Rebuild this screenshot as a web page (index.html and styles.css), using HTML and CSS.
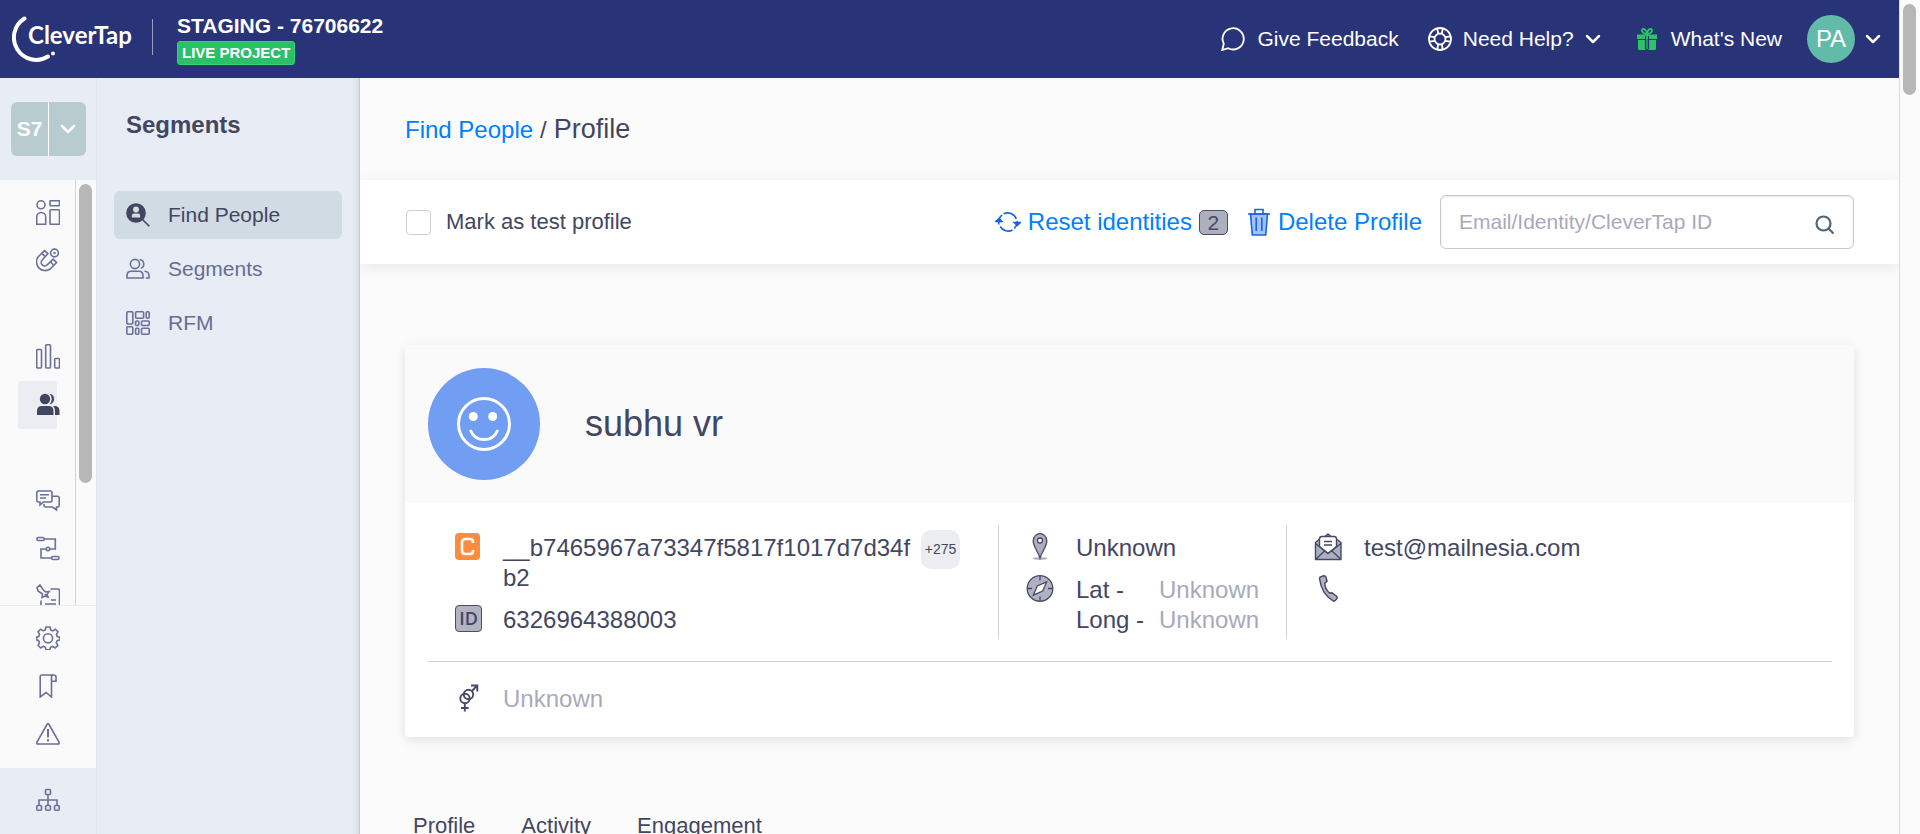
FILE: index.html
```html
<!DOCTYPE html>
<html lang="en">
<head>
<meta charset="utf-8">
<title>Find People / Profile</title>
<link rel="stylesheet" href="styles.css">
</head>
<body>
<div class="window">
  <div class="app">
    <header class="topbar">
      <a class="logo" href="#" aria-label="CleverTap">
        <svg class="logo-mark" viewBox="0 0 124 46" width="124" height="46">
          <path d="M12.500 2.500A22 22 0 1 0 36 40.500" fill="none" stroke="#fff" stroke-width="4" stroke-linecap="round"/>
          <circle cx="41" cy="37.500" r="2" fill="#fff"/>
          <text x="16" y="28" class="logo-text">CleverTap</text>
        </svg>
      </a>
      <div class="project">
        <span class="project-name">STAGING - 76706622</span>
        <span class="project-tag">LIVE PROJECT</span>
      </div>
      <nav class="top-actions">
        <a class="top-link" href="#">
          <svg class="icon" viewBox="0 0 24 24"><path d="M1.200 23l1.600-6.200A10.600 10.600 0 1 1 7.200 21.200z"/></svg>Give Feedback</a>
        <button class="top-link help" type="button">
          <svg class="icon" viewBox="0 0 24 24"><circle cx="12" cy="12" r="11"/><circle cx="12" cy="12" r="5.500"/><path d="M9.300 1.500l.8 5.200M14.700 1.500l-.8 5.200M9.300 22.500l.8-5.200M14.700 22.500l-.8-5.200M1.500 9.300l5.200.8M1.500 14.700l5.200-.8M22.500 9.300l-5.200.8M22.500 14.700l-5.200-.8"/></svg>Need Help?
          <svg class="chevron" viewBox="0 0 16 10"><path d="M2 2l6 6 6-6"/></svg></button>
        <a class="top-link news" href="#">
          <svg class="gift" viewBox="0 0 22 22"><path d="M1 6.500h20V11H1zM2 12h7.500v10H3.500Q2 22 2 20.500zM12.500 12H20v8.500q0 1.500-1.500 1.500h-6z" fill="#2dc268"/><path d="M11 8v13" stroke="#2dc268" stroke-width="1.400"/><path d="M9.500 8v13M12.500 8v13" stroke="#293377" stroke-width="1.200"/><path d="M11 6C5 5.500 5 1 7.500 1 9.500 1 11 4 11 6c0-2 1.500-5 3.500-5C17 1 17 5.500 11 6z" fill="none" stroke="#2dc268" stroke-width="1.800"/></svg>What's New</a>
        <button class="account" type="button"><span class="avatar">PA</span><svg class="chevron" viewBox="0 0 16 10"><path d="M2 2l6 6 6-6"/></svg></button>
      </nav>
    </header>

    <div class="workspace">
      <aside class="rail">
        <div class="rail-head">
          <button class="switcher" type="button"><span>S7</span><span class="switcher-arrow"><svg class="chevron" viewBox="0 0 16 10"><path d="M2 2l6 6 6-6"/></svg></span></button>
        </div>
        <div class="rail-scroll">
          <nav class="rail-nav">
            <a href="#" aria-label="Boards"><svg viewBox="0 0 24 25"><circle cx="5" cy="4.800" r="4"/><path d="M.7 24.300V17a4.500 4.500 0 0 1 9 0v7.300z"/><rect x="14" y=".7" width="9.500" height="5" rx=".8"/><rect x="14" y="9.800" width="9.500" height="14.500" rx=".8"/></svg></a>
            <a href="#" aria-label="Acquisition"><svg viewBox="0 0 24 25"><path d="M8.500 2.600l3.400 3L6.200 12a3.300 3.300 0 0 0 5 4.800l6-5.600 3.400 3.400-6.400 6.400A8.700 8.700 0 0 1 2 9z"/><path d="M5.900 5.400l3.300 3.200M14.300 13.800l3.400 3.500"/><circle cx="18.500" cy="5" r="3.900"/><circle cx="18.500" cy="5" r=".5"/></svg></a>
            <a class="section-start" href="#" aria-label="Analytics"><svg viewBox="0 0 24 25"><rect x=".7" y="5.500" width="4.800" height="18.500" rx="1"/><rect x="9.700" y=".8" width="4.800" height="23.200" rx="1"/><rect x="18.700" y="14.500" width="4.800" height="9.500" rx="1"/></svg></a>
            <a class="active" href="#" aria-label="Segments"><svg class="solid" viewBox="0 0 24 25"><circle cx="9" cy="7" r="5.200"/><path d="M1 23v-4q0-5 5-5h6.500q5 0 5 5v4zM13.500 1.800a5.300 5.300 0 0 1 0 10.500q2.300-2 2.300-5.200t-2.300-5.300zM17 14h1.500q5 0 5 5v4H19v-4q0-3.500-2-5z"/></svg></a>
            <a class="section-start" href="#" aria-label="Messages"><svg viewBox="0 0 24 25"><path d="M2.500 3h11.800q1.700 0 1.700 1.700v7.600q0 1.700-1.700 1.700H7.500L4 17v-3H2.500Q.8 14 .8 12.300V4.700Q.8 3 2.500 3zM4 6.800h9M4 10h6"/><path d="M16 8.200h5.500q1.700 0 1.700 1.700v7.400q0 1.700-1.700 1.700H20.500v3l-4-3H9.700Q8 19 8 17.300V16"/></svg></a>
            <a href="#" aria-label="Journeys"><svg viewBox="0 0 24 25"><rect x=".8" y="1.500" width="7.500" height="3" rx="1.500"/><path d="M8.300 3h11v10h-5.700M10.300 13H5v9h10.500"/><circle cx="12" cy="13" r="1.700"/><rect x="15.500" y="20.500" width="7.500" height="3" rx="1.500"/></svg></a>
            <a href="#" aria-label="Campaign designer"><svg viewBox="0 0 24 25"><path d="M1 3.500L4 1l3 4.500 2.500 2.500L13 7.500l-2 3 1 2.500-3-1-3 1.500.5-3.500L2 7zM9 10l3 3.500M14.500 5H22q1.500 0 1.500 1.500V26M5 16.500V26M15 16h5M9 20h11"/></svg></a>
          </nav>
          <div class="rail-track"><div class="rail-thumb"></div></div>
        </div>
        <nav class="rail-tools">
          <a href="#" aria-label="Settings"><svg viewBox="0 0 24 24"><path d="M9.900 1h4.200l.6 3 2.200.9 2.500-1.700 2.600 2.700-1.600 2.500.9 2.200 2.300.4v3l-2.500.7-.8 2.100 1.600 2.600-2.700 2.600-2.600-1.600-2.100.9-.6 2.600H10l-.6-2.700-2.200-.9-2.600 1.700-2.600-2.700 1.500-2.500-.8-2.100L.7 14v-3l2-.4.9-2.200L2 5.900l2.700-2.700 2.500 1.600L9.300 4z" stroke-linejoin="round"/><circle cx="12" cy="12.300" r="4.600"/></svg></a>
          <a href="#" aria-label="Bookmarks"><svg viewBox="0 0 24 24"><path d="M17.500 1H6Q4.200 1 4.200 3v20l5.900-4.500 5.400 4.500V3q0-2 2.200-2t2.300 2v4.300h-4.500"/></svg></a>
          <a href="#" aria-label="Alerts"><svg viewBox="0 0 24 24"><path d="M11 2.500q1-1.700 2 0l10 17.700q.8 1.800-1 1.800H2q-1.800 0-1-1.800z"/><path d="M12 7v8.500M12 17.300v2.200" stroke-width="2"/></svg></a>
        </nav>
        <div class="rail-foot">
          <a href="#" aria-label="Organization"><svg viewBox="0 0 24 24"><rect x="9.500" y="1.500" width="5" height="5" rx="1"/><rect x=".8" y="17.500" width="4.700" height="4.700" rx="1"/><rect x="9.700" y="17.500" width="4.700" height="4.700" rx="1"/><rect x="18.500" y="17.500" width="4.700" height="4.700" rx="1"/><path d="M12 6.500v11M3 17.500V12h18v5.500"/></svg></a>
        </div>
      </aside>

      <aside class="submenu">
        <h2>Segments</h2>
        <nav class="submenu-list">
          <a class="current" href="#"><svg viewBox="0 0 24 24"><circle cx="10" cy="10" r="9.800" fill="#414560"/><path d="M16.500 16.500l6.800 6.800" stroke="#414560" stroke-width="1.600"/><circle cx="10" cy="6.500" r="3" fill="#d1dbe4"/><path d="M5.800 14.500v-1.700q0-2.300 2.300-2.300h3.800q2.300 0 2.300 2.300v1.700z" fill="#d1dbe4"/></svg>Find People</a>
          <a href="#"><svg viewBox="0 0 24 24"><circle cx="9" cy="7" r="4.600"/><path d="M1 21v-2.500q0-4.300 4.300-4.300h7.400q4.300 0 4.300 4.300V21zM13.500 2.500a4.600 4.600 0 0 1 1.500 8.800M18.500 14.200q4.500.3 4.500 4.300V21h-3.300"/></svg>Segments</a>
          <a href="#"><svg viewBox="0 0 24 24"><rect x=".8" y=".8" width="6" height="12.200" rx="1"/><rect x="9.600" y=".8" width="8" height="6.400" rx="1"/><rect x="20.200" y=".8" width="3" height="6.400" rx="1"/><rect x="9.600" y="10" width="3.200" height="4.500" rx="1"/><rect x="15.500" y="10" width="7.700" height="4.500" rx="1"/><rect x=".8" y="15.800" width="6" height="7.400" rx="1"/><rect x="9.600" y="17.200" width="3.200" height="6" rx="1"/><rect x="15.500" y="17.200" width="7.700" height="6" rx="1"/></svg>RFM</a>
        </nav>
      </aside>

      <main class="content">
        <nav class="breadcrumb"><a href="#">Find People</a><span>/</span><span class="crumb-here">Profile</span></nav>
        <section class="toolbar">
          <label class="test-flag" for="test-profile"><input type="checkbox" id="test-profile">Mark as test profile</label>
          <div class="toolbar-actions">
            <button class="action reset" type="button"><svg viewBox="0 0 26 22" width="26" height="22"><path d="M4 13.500A9.300 9.300 0 0 1 7 4M8.500 2.900a9.300 9.300 0 0 1 12.800 5M22.200 10a9.300 9.300 0 0 1-3 7.500M17.500 19a9.300 9.300 0 0 1-12.300-3.500"/><path class="tip" d="M.8 10.500l3.200-3 3 3zM19.200 11.500l3.100 3 3-3z"/></svg>Reset identities<span class="count">2</span></button>
            <button class="action" type="button"><svg viewBox="0 0 22 28" width="22" height="28"><path d="M2.500 6h17L17.700 27H4.300z" fill="#a4c2f8"/><path d="M0 6h22M7 6V1.500h8V6M8.200 9.500v13.500M13.800 9.500v13.500"/></svg>Delete Profile</button>
            <div class="search">
              <input type="text" aria-label="Search profile" placeholder="Email/Identity/CleverTap ID">
              <button type="button" aria-label="Search"><svg viewBox="0 0 20 20" width="20" height="20"><circle cx="8.500" cy="8.500" r="7"/><path d="M13.500 13.500l5 5"/></svg></button>
            </div>
          </div>
        </section>

        <article class="card">
          <header class="card-head">
            <span class="face"><svg viewBox="0 0 54 54" width="54" height="54"><circle cx="27" cy="27" r="25.500"/><path d="M13.800 34a14.500 14.500 0 0 0 26.500 0" stroke-linecap="round"/><circle class="eye" cx="16.300" cy="19.500" r="4.500"/><circle class="eye" cx="35.700" cy="19.500" r="4.500"/></svg></span>
            <h1>subhu vr</h1>
          </header>
          <div class="card-body">
            <div class="facts">
              <div class="fact-col ids">
                <div class="fact">
                  <span class="tile brand"><svg viewBox="0 0 26 28" width="26" height="28"><rect width="25" height="27" rx="4" fill="#ff8c3e"/><path d="M18 10V9Q18 6 15 6H10.500Q7 6 7 9.500v8q0 3.500 3.500 3.500H15q3 0 3-3v-1" fill="none" stroke="#fff" stroke-width="2.600"/></svg></span>
                  <span class="fact-text identity">__b7465967a73347f5817f1017d7d34fb2</span>
                  <button class="more" type="button">+275</button>
                </div>
                <div class="fact"><span class="tile"><span class="id-tile">ID</span></span><span class="fact-text">6326964388003</span></div>
              </div>
              <div class="fact-col place">
                <div class="fact"><span class="tile wide"><svg viewBox="0 0 28 28" width="28" height="28"><ellipse cx="14" cy="25.500" rx="7.500" ry="1.500" fill="#b4b5c4"/><path d="M14 25C12 18.500 7.200 13.500 7.200 8a6.800 7.300 0 0 1 13.600 0C20.800 13.500 16 18.500 14 25z" fill="#acafbf" stroke="#474a66" stroke-width="1.300"/><circle cx="14" cy="7.500" r="2.500" fill="#fff" stroke="#474a66" stroke-width="1.300"/></svg></span><span class="fact-text">Unknown</span></div>
                <div class="fact"><span class="tile wide"><svg viewBox="0 0 28 28" width="28" height="28"><circle cx="14" cy="13.500" r="12.800" fill="#b0b2c1" stroke="#474a66" stroke-width="1.300"/><path d="M14 1v4.500M14 21.500V26M1 13.500h5M22 13.500h5" stroke="#474a66" stroke-width="1.300"/><path d="M20.700 6.800L16.700 16.100 7.300 20.200l4-9.300z" fill="#fff" stroke="#474a66" stroke-width="1.300"/></svg></span>
                  <dl class="coords"><dt>Lat -</dt><dd>Unknown</dd><dt>Long -</dt><dd>Unknown</dd></dl></div>
              </div>
              <div class="fact-col contact">
                <div class="fact"><span class="tile wide"><svg viewBox="0 0 28 28" width="28" height="28" stroke="#474a66" stroke-width="1.400" stroke-linejoin="round"><path d="M1.500 9.500L5.500 6 11 3.500 14 1l3 2.500L22.500 6 27 9.500V26.500H1.500z" fill="#acafbf"/><path d="M5.500 13.500V6q0-2.500 2.500-2.500h12q2.500 0 2.500 2.500v7.500L14 20.500z" fill="#fff"/><path d="M1.500 10.500l12.500 10 13-10M2 26l8.500-8M26.500 26l-8.500-8M10 8.500h8M10 12h8" fill="none"/></svg></span><span class="fact-text">test@mailnesia.com</span></div>
                <div class="fact"><span class="tile wide"><svg viewBox="0 0 28 28" width="28" height="28"><path d="M5.500 3.500q0-1.500 2-2l2.500-.8q1.500 0 2 1.600l1 4-2.300 2q.2 6 5 9.800l2.300-.4 4.800 3.800q.7 1-.3 2.500-1 2-2.500 2.300Q7.500 19.500 5.500 3.500z" fill="#b0b2c1" stroke="#474a66" stroke-width="1.500"/></svg></span></div>
              </div>
            </div>
            <div class="gender fact"><span class="tile"><svg viewBox="0 0 26 28" width="26" height="28" fill="none" stroke="#474a66" stroke-width="1.900"><circle cx="13.500" cy="10.500" r="4.700"/><circle cx="10" cy="14.500" r="4.700"/><path d="M17 7l5.200-5.700M16 1.500h6.300v6M9.800 19.500v8M6 24h7.600"/></svg></span><span class="fact-text muted">Unknown</span></div>
          </div>
        </article>

        <nav class="tabs"><a href="#">Profile</a><a href="#">Activity</a><a href="#">Engagement</a></nav>
      </main>
    </div>
  </div>
  <div class="page-track"><div class="page-thumb"></div></div>
</div>
</body>
</html>
```

FILE: styles.css
```css
* { box-sizing: border-box; }

body {
  margin: 0;
  font-family: "Liberation Sans", Arial, sans-serif;
  font-size: 24px;
  line-height: 30px;
  color: #434660;
  background: #fbfbfb;
}

a { color: inherit; text-decoration: none; }
button { font: inherit; color: inherit; background: none; border: 0; padding: 0; cursor: pointer; }
svg { display: block; flex: none; }

.window { display: flex; height: 100vh; overflow: hidden; }
.app { flex: 1; min-width: 0; display: flex; flex-direction: column; }
.page-track { width: 21px; flex: none; border-left: 1px solid #dcdcdc; background: #fbfbfb; padding: 4px 4px 4px 3px; }
.page-thumb { height: 11%; border-radius: 7px; background: #b7b7b7; }

/* Top bar */
.topbar {
  flex: none;
  display: flex;
  align-items: center;
  height: 78px;
  padding: 0 18px 0 12px;
  background: #293377;
  color: #fff;
}
.logo { padding-right: 16px; }
.logo-text { font: 700 24px Lato, sans-serif; fill: #fff; }
.project {
  display: flex;
  flex-direction: column;
  align-items: flex-start;
  gap: 2px;
  position: relative;
  padding-left: 25px;
}
.project::before {
  content: "";
  position: absolute;
  left: 0;
  top: 6px;
  bottom: 10px;
  width: 1px;
  background: #9a9fc2;
}
.project-name { font-size: 21px; font-weight: 700; line-height: 26px; }
.project-tag {
  padding: 0 4px;
  border: 1px solid #31d476;
  border-radius: 3px;
  background: #2dbf67;
  font-size: 15px;
  font-weight: 700;
  line-height: 22px;
}
.top-actions { display: flex; align-items: center; margin-left: auto; font-size: 21px; }
.top-link { display: flex; align-items: center; gap: 12px; }
.icon { width: 24px; height: 24px; fill: none; stroke: #fff; stroke-width: 1.8; }
.chevron { width: 16px; height: 10px; fill: none; stroke: #fff; stroke-width: 2.5; stroke-linecap: round; stroke-linejoin: round; }
.gift { width: 22px; height: 22px; }
.help { gap: 11px; margin: 0 35px 0 29px; }
.news { gap: 13px; margin-right: 25px; }
.account { display: flex; align-items: center; gap: 10px; }
.avatar { width: 48px; height: 48px; border-radius: 50%; background: #62baa9; font-size: 24px; line-height: 48px; text-align: center; }

/* Icon rail */
.workspace { flex: 1; min-height: 0; display: flex; }
.rail { width: 96px; flex: none; display: flex; flex-direction: column; background: #fafafa; }
.rail svg { fill: none; stroke: #6b7099; stroke-width: 1.6; }
.rail-head { height: 102px; padding: 24px 10px 24px 11px; background: #e8edf5; }
.switcher {
  display: flex;
  width: 100%;
  height: 54px;
  border-radius: 6px;
  background: #b8cccf;
  color: #fff;
  font-size: 21px;
  font-weight: 700;
  line-height: 54px;
}
.switcher > span { flex: 1; }
.switcher-arrow { display: flex; align-items: center; justify-content: center; align-self: stretch; border-left: 1px solid #fff; }
.rail .chevron { stroke: #fff; stroke-width: 2.5; }
.rail-scroll { flex: 1; min-height: 0; display: flex; overflow: hidden; }
.rail-nav { width: 75px; padding: 9px 0 0 18px; }
.rail-nav a { display: flex; align-items: center; width: 39px; height: 48px; padding: 0 0 2px 18px; border-radius: 3px; }
.rail-nav .section-start { margin-top: 48px; }
.rail-nav .active { background: #ecedf2; }
.rail-nav svg { width: 24px; height: 25px; }
.rail .solid { fill: #414560; stroke: none; }
.rail-track { flex: 1; border-left: 1px solid #d3d3d3; padding: 4px 4px 0 3px; }
.rail-thumb { height: 71%; border-radius: 7px; background: #b7b7b7; }
.rail-tools { padding: 8px 0 10px; border-top: 1px solid #ececee; }
.rail-tools a, .rail-foot a { display: flex; align-items: center; height: 48px; padding-left: 36px; }
.rail-tools svg, .rail-foot svg { width: 24px; height: 24px; }
.rail-foot { height: 66px; padding-top: 8px; background: #e8edf5; }

/* Section menu */
.submenu { width: 264px; flex: none; padding: 32px 17px 0; border-left: 1px solid #e0e5ee; border-right: 1px solid #c8cbd2; background: #e8edf5; box-shadow: inset -8px 0 8px -8px #c9cdd6; }
.submenu h2 { margin: 0 0 51px; padding-left: 12px; font-size: 24px; line-height: 30px; }
.submenu-list { display: flex; flex-direction: column; gap: 6px; font-size: 21px; color: #676c96; }
.submenu-list a { display: flex; align-items: center; gap: 18px; height: 48px; padding-left: 12px; border-radius: 6px; }
.submenu-list svg { width: 24px; height: 24px; fill: none; stroke: #6b7099; stroke-width: 1.6; }
.submenu-list .current { background: #d1dbe4; color: #434660; }
.submenu-list .current svg { stroke: none; }

/* Content */
.content { flex: 1; min-width: 0; overflow: hidden; }
.breadcrumb { display: flex; align-items: baseline; gap: 7px; height: 102px; padding: 36px 45px 0; }
.breadcrumb a { color: #007fff; }
.crumb-here { font-size: 27px; }
.toolbar {
  display: flex;
  align-items: center;
  justify-content: space-between;
  height: 84px;
  padding: 0 45px 0 46px;
  background: #fff;
  box-shadow: 0 3px 15px rgba(0, 0, 0, .08);
}
.test-flag { display: flex; align-items: center; gap: 15px; font-size: 22px; }
.test-flag input { appearance: none; width: 25px; height: 25px; margin: 0; border: 1px solid #cfcfcf; border-radius: 4px; background: #fff; }
.toolbar-actions { display: flex; align-items: center; }
.action { display: flex; align-items: center; gap: 8px; margin-right: 18px; color: #007fff; }
.action svg { fill: none; stroke: #1565e6; stroke-width: 1.6; }
.reset { gap: 7px; margin-right: 20px; }
.reset .tip { fill: #1565e6; }
.count { width: 29px; height: 25px; border: 1px solid #4a4d68; border-radius: 5px; background: #acafbd; color: #474a66; font-size: 21px; line-height: 23px; }
.search { position: relative; width: 414px; }
.search input {
  display: block;
  width: 100%;
  height: 54px;
  padding: 0 60px 0 18px;
  border: 1px solid #c9c9c9;
  border-radius: 6px;
  background: #fff;
  box-shadow: inset 0 1px 2px rgba(0, 0, 0, .1);
  font: inherit;
  font-size: 21px;
}
.search input::placeholder { color: #a8aabb; opacity: 1; }
.search button { position: absolute; right: 19px; top: 20px; }
.search svg { fill: none; stroke: #526575; stroke-width: 2.2; }

/* Profile card */
.card { margin: 81px 45px 0; border-radius: 4px; background: #fff; box-shadow: 0 3px 12px rgba(0, 0, 0, .11); }
.card-head { display: flex; align-items: center; gap: 45px; padding: 23px; border-radius: 4px; background: #fafafa; }
.face { display: flex; align-items: center; justify-content: center; width: 112px; height: 112px; border-radius: 50%; background: #719df2; }
.face svg { fill: none; stroke: #fff; stroke-width: 3; }
.face .eye { fill: #fff; stroke: none; }
.card-head h1 { margin: 0; font-size: 36px; font-weight: 400; line-height: 42px; }
.card-body { padding: 22px 22px 0 23px; }
.facts { display: flex; padding-bottom: 22px; border-bottom: 1px solid #d2d2d2; }
.fact-col { display: flex; flex-direction: column; gap: 12px; padding: 8px 27px 4px; }
.fact { display: flex; align-items: flex-start; }
.tile { width: 48px; flex: none; }
.tile.wide { width: 50px; }
.ids { flex: 0 0 571px; border-right: 1px solid #d2d2d2; }
.place { flex: 0 0 288px; padding-right: 16px; border-right: 1px solid #d2d2d2; }
.contact { flex: 1; }
.identity { width: 408px; word-break: break-all; }
.more { width: 39px; height: 39px; margin: -3px 0 -10px 10px; border-radius: 10px; background: #ecedf1; font-size: 14px; line-height: 37px; }
.id-tile { display: block; width: 27px; height: 27px; border: 1px solid #4a4d68; border-radius: 4px; background: #b2b4c3; font: 600 18px/25px "Open Sans", sans-serif; text-align: center; }
.coords { flex: 1; display: grid; grid-template-columns: 83px 1fr; margin: 0; }
.coords dd { margin: 0; color: #a8aabb; }
.muted { color: #a8aabb; }
.gender { padding: 22px 27px 23px; }

.tabs { display: flex; gap: 46px; margin-top: 74px; padding: 0 53px; font-size: 22px; }
```
